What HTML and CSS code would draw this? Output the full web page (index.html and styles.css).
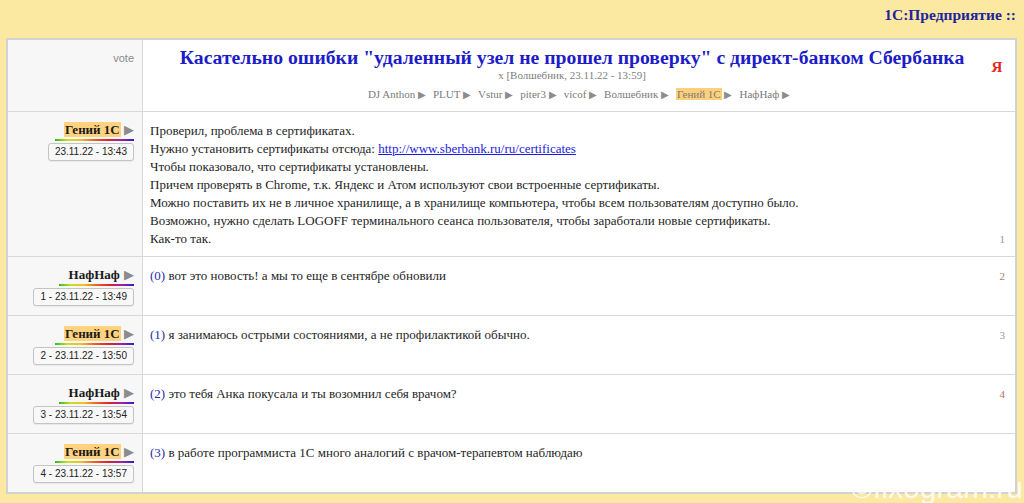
FILE: index.html
```html
<!DOCTYPE html>
<html lang="ru">
<head>
<meta charset="utf-8">
<title>Касательно ошибки</title>
<link rel="stylesheet" href="styles.css">
</head>
<body>
<div class="topbar">1С:Предприятие ::</div>
<table class="thread">
  <tr class="head">
    <td class="side"><span class="vote">vote</span></td>
    <td class="main">
      <div class="head-inner">
        <div class="title-block">
          <h1 class="title">Касательно ошибки "удаленный узел не прошел проверку" с директ-банком Сбербанка</h1>
          <div class="sub">x [Волшебник, 23.11.22 - 13:59]</div>
          <div class="people">
            <span>DJ Anthon <i class="arr">▶</i></span>
            <span>PLUT <i class="arr">▶</i></span>
            <span>Vstur <i class="arr">▶</i></span>
            <span>piter3 <i class="arr">▶</i></span>
            <span>vicof <i class="arr">▶</i></span>
            <span>Волшебник <i class="arr">▶</i></span>
            <span><b class="hl-plain">Гений 1С</b> <i class="arr">▶</i></span>
            <span>НафНаф <i class="arr">▶</i></span>
          </div>
        </div>
        <span class="ya">Я</span>
      </div>
    </td>
  </tr>
  <tr>
    <td class="side">
      <div class="author"><span class="name hl">Гений 1С</span> <i class="arr">▶</i></div>
      <div class="date">23.11.22 - 13:43</div>
    </td>
    <td class="msg">
      Проверил, проблема в сертификатах.<br>
      Нужно установить сертификаты отсюда: <a href="#">http://www.sberbank.ru/ru/certificates</a><br>
      Чтобы показовало, что сертификаты установлены.<br>
      Причем проверять в Chrome, т.к. Яндекс и Атом используют свои встроенные сертификаты.<br>
      Можно поставить их не в личное хранилище, а в хранилище компьютера, чтобы всем пользователям доступно было.<br>
      Возможно, нужно сделать LOGOFF терминального сеанса пользователя, чтобы заработали новые сертификаты.<br>
      Как-то так.<span class="num n1">1</span>
    </td>
  </tr>
  <tr>
    <td class="side">
      <div class="author"><span class="name">НафНаф</span> <i class="arr">▶</i></div>
      <div class="date">1 - 23.11.22 - 13:49</div>
    </td>
    <td class="msg"><span class="ref">(0)</span> вот это новость! а мы то еще в сентябре обновили<span class="num n2">2</span></td>
  </tr>
  <tr>
    <td class="side">
      <div class="author"><span class="name hl">Гений 1С</span> <i class="arr">▶</i></div>
      <div class="date">2 - 23.11.22 - 13:50</div>
    </td>
    <td class="msg"><span class="ref">(1)</span> я занимаюсь острыми состояниями, а не профилактикой обычно.<span class="num n3">3</span></td>
  </tr>
  <tr>
    <td class="side">
      <div class="author"><span class="name">НафНаф</span> <i class="arr">▶</i></div>
      <div class="date">3 - 23.11.22 - 13:54</div>
    </td>
    <td class="msg"><span class="ref">(2)</span> это тебя Анка покусала и ты возомнил себя врачом?<span class="num n4">4</span></td>
  </tr>
  <tr>
    <td class="side">
      <div class="author"><span class="name hl">Гений 1С</span> <i class="arr">▶</i></div>
      <div class="date">4 - 23.11.22 - 13:57</div>
    </td>
    <td class="msg"><span class="ref">(3)</span> в работе программиста 1С много аналогий с врачом-терапевтом наблюдаю</td>
  </tr>
</table>
<div class="watermark">©fixogram.ru</div>
</body>
</html>
```

FILE: styles.css
```css
html, body {
  margin: 0;
  padding: 0;
}
body {
  background: #fbe9a1;
  font-family: "Liberation Serif", "Times New Roman", serif;
  font-size: 13px;
  color: #1e1e1e;
  position: relative;
  height: 503px;
  overflow: hidden;
}
.topbar {
  height: 38px;
  box-sizing: border-box;
  padding: 6px 8px 0 0;
  text-align: right;
  font-weight: bold;
  font-size: 15.5px;
  color: #24249c;
}
.thread {
  margin: 0 7px 0 6px;
  width: calc(100% - 13px);
  border-collapse: collapse;
  border: 2px solid #d2d2d2;
  background: #fff;
}
.thread td {
  border: 1px solid #d9d9d9;
  vertical-align: top;
}
.side {
  width: 116px;
  background: #f7f7f7;
  text-align: right;
  padding: 9px 8px 9px 10px;
}
.head .side {
  padding-top: 10px;
}
.vote {
  font-family: "Liberation Sans", Arial, sans-serif;
  font-size: 11px;
  color: #8a8a8a;
}
.main {
  padding: 6px 8px 8px 8px;
}
.head-inner {
  display: flex;
  align-items: flex-start;
}
.title-block {
  flex: 1;
  text-align: center;
  padding-left: 6px;
}
.title {
  margin: 0;
  font-size: 19.7px;
  line-height: 22px;
  font-weight: bold;
  color: #1c1cc8;
}
.sub {
  font-size: 11px;
  line-height: 14px;
  color: #808080;
}
.people {
  margin-top: 4px;
  font-size: 11px;
  line-height: 16px;
  color: #7a7a7a;
  display: flex;
  justify-content: center;
  gap: 7px;
  padding-left: 14px;
}
.arr {
  font-style: normal;
  color: #8c8c8c;
  font-size: 10px;
}
.hl-plain {
  font-weight: normal;
  background: #ffd07c;
  color: #7a7a7a;
  padding: 0 1px;
}
.ya {
  width: 20px;
  margin-top: 13px;
  text-align: center;
  color: #e8251b;
  font-size: 15px;
  font-weight: bold;
}
.author {
  display: inline-block;
  line-height: 18px;
  padding-left: 9px;
  border-bottom: 2px solid;
  border-image: linear-gradient(to right, #22bb22, #c8e020, #f0c020, #f06020, #e02030, #a020a0, #2020d0) 1;
}
.author .arr {
  font-size: 13px;
  color: #8c8c8c;
}
.name {
  font-weight: bold;
  font-size: 13px;
  color: #1a1a1a;
  padding: 0 1px;
}
.name.hl {
  background: #ffd27f;
}
.date {
  display: inline-block;
  margin-top: 2px;
  padding: 0 6px;
  height: 16px;
  line-height: 16px;
  border: 1px solid #c4c4c4;
  border-radius: 3px;
  background: #f8f8f8;
  box-shadow: 0 1px 1px rgba(0, 0, 0, 0.06);
  font-family: "Liberation Sans", Arial, sans-serif;
  font-size: 10px;
  color: #222;
}
.msg {
  padding: 10px 10px 8px 7px;
  line-height: 18px;
  font-size: 13px;
}
.msg a {
  color: #1a1ae0;
}
.ref {
  color: #2b2ba8;
}
.num {
  float: right;
  font-size: 11px;
  color: #9a9a9a;
}
.n1 { color: #8c96a8; }
.n2 { color: #a0846a; }
.n3 { color: #9a9a9a; }
.n4 { color: #b0705c; }
.watermark {
  position: absolute;
  right: 1px;
  bottom: 0;
  line-height: 30px;
  font-family: "Liberation Sans", Arial, sans-serif;
  font-size: 30px;
  color: rgba(255, 255, 255, 0.85);
  pointer-events: none;
}
```
